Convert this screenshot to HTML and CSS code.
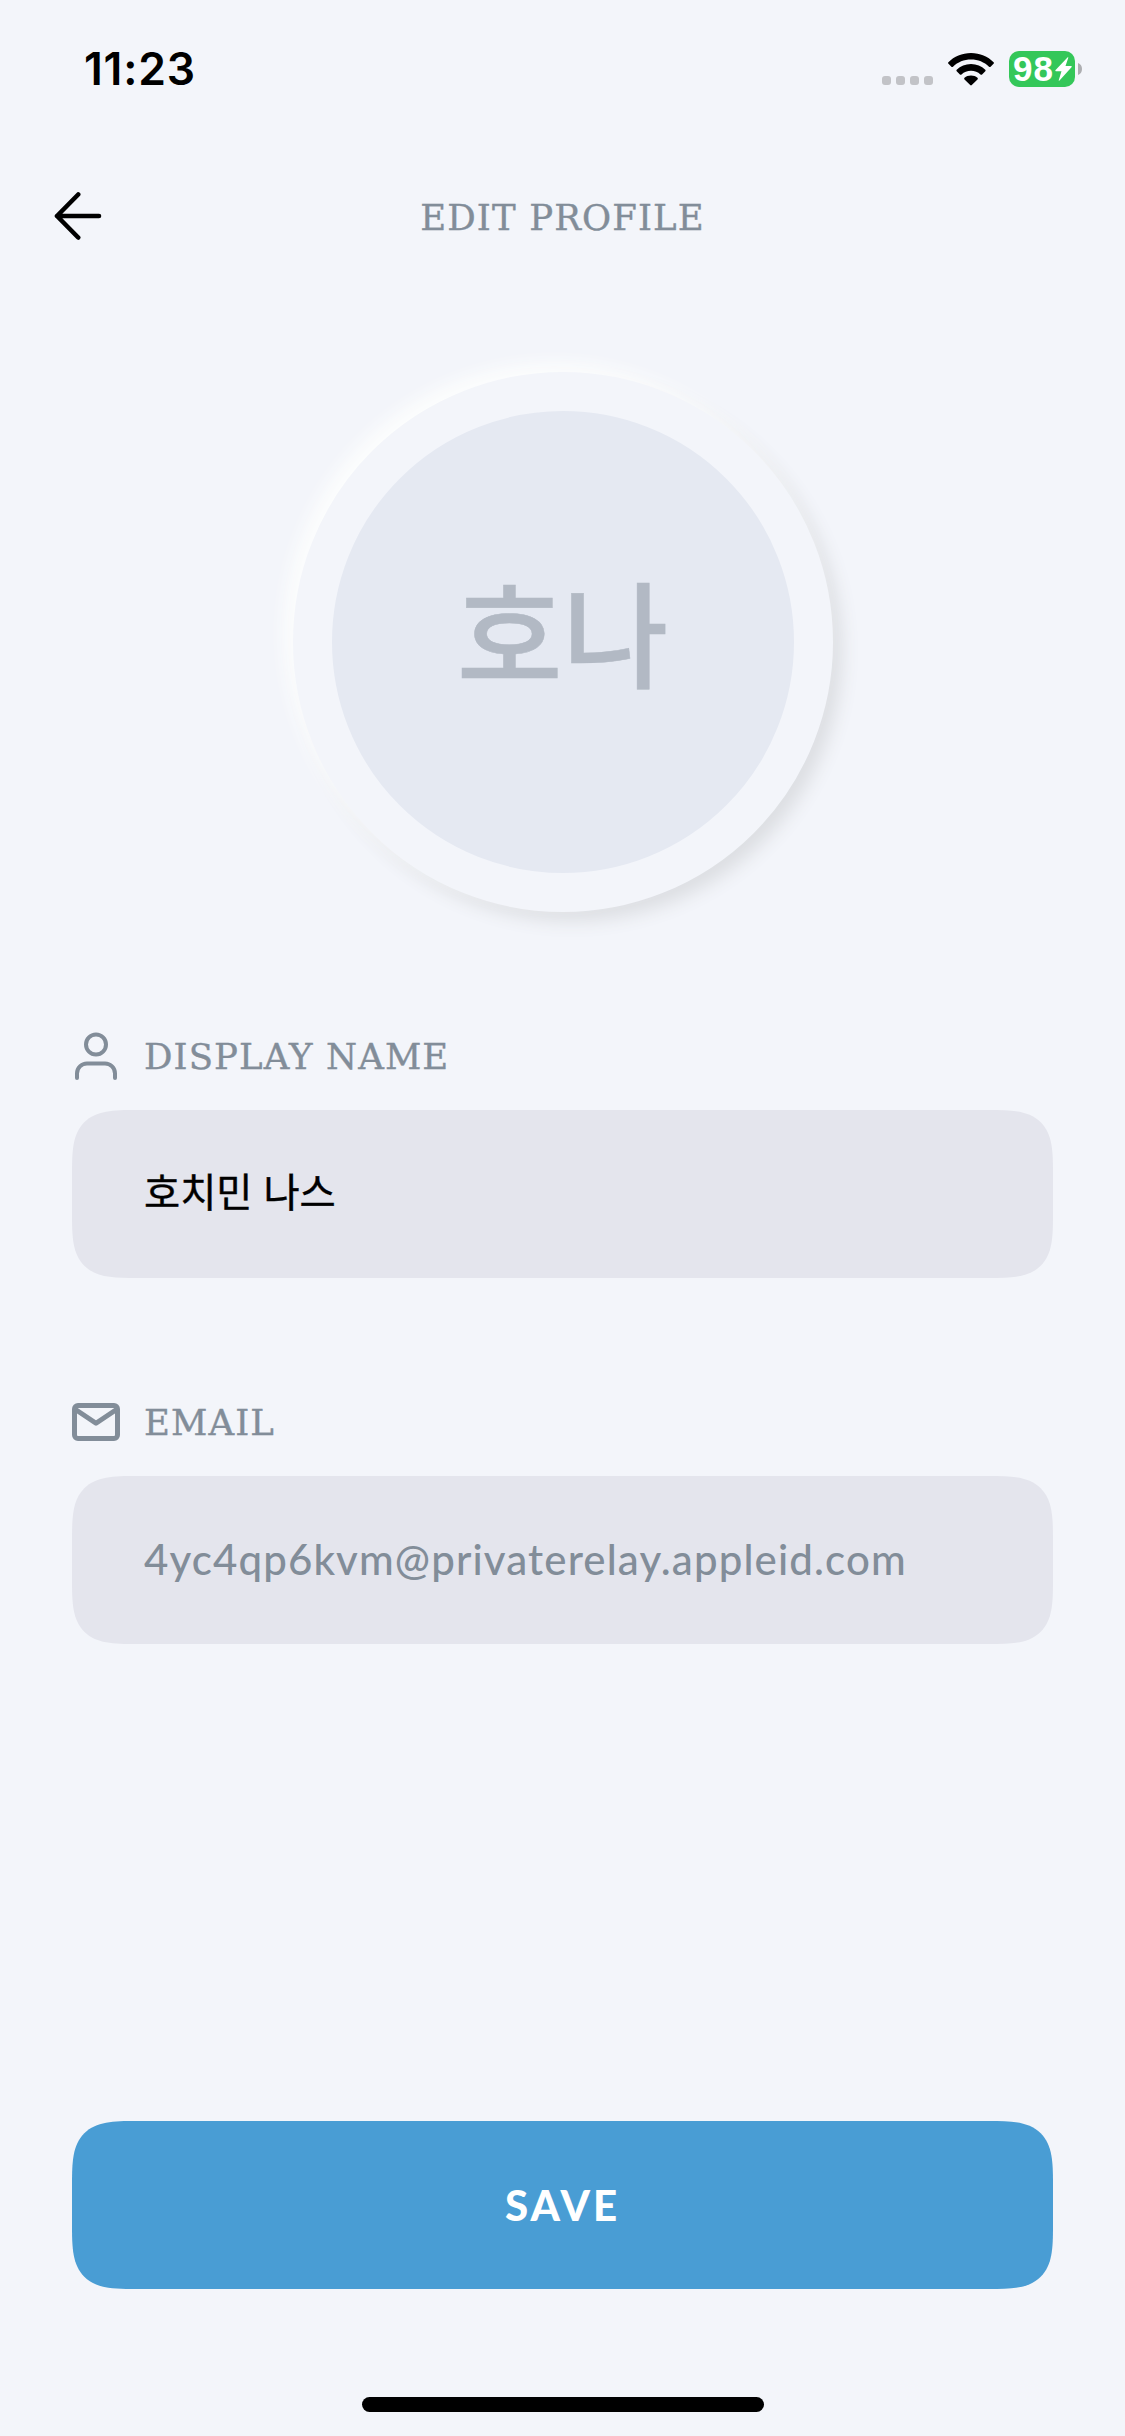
FILE: index.html
```html
<!DOCTYPE html>
<html lang="ko">
<head>
<meta charset="utf-8">
<title>Edit Profile</title>
<link rel="stylesheet" href="styles.css">
</head>
<body>
<div class="screen">
  <div class="status-bar">
    <span class="clock">11:23</span>
    <div class="indicators">
      <div class="signal"><i class="dot"></i><i class="dot"></i><i class="dot"></i><i class="dot"></i></div>
      <svg class="wifi" viewBox="0 0 46 33" width="46" height="33">
        <path d="M23 0C32 0 39.800 3.500 45.600 9.200Q46.300 10 45.500 10.800L42.600 13.700Q41.800 14.400 41 13.700C36.200 9.200 30 6.600 23 6.600S9.800 9.200 5 13.700Q4.200 14.400 3.400 13.700L.5 10.800Q-.3 10 .4 9.200C6.200 3.500 14 0 23 0Z"/>
        <path d="M23 11C28.600 11 33.500 13.100 37.300 16.700Q38 17.500 37.300 18.300L34.100 21.400Q33.300 22.100 32.500 21.400C29.900 19 26.700 17.700 23 17.700S16.100 19 13.500 21.400Q12.700 22.100 11.900 21.400L8.700 18.300Q8 17.500 8.700 16.700C12.500 13.100 17.400 11 23 11Z"/>
        <path d="M23 22.500C25.600 22.500 27.700 23.300 29.500 24.800Q30.300 25.600 29.500 26.400L23.800 32.100Q23 32.900 22.200 32.100L16.500 26.400Q15.700 25.600 16.500 24.800C18.300 23.300 20.400 22.500 23 22.500Z"/>
      </svg>
      <div class="battery">
        <div class="battery-body">
          <span class="battery-level">98</span>
          <svg viewBox="0 0 17 24" width="17" height="24"><path d="M12.700.3Q13.600-.2 13.200 1L10.500 9H16.200Q17.200 9.200 16.500 10.200L4.500 23.500Q3.500 24.300 3.800 23L6.500 14.300H.9Q-.2 14.100.6 13Z" fill="#fff"/></svg>
        </div>
        <svg class="battery-cap" viewBox="0 0 4 12" width="4" height="12"><path d="M0 0Q4 1.500 4 6T0 12Z"/></svg>
      </div>
    </div>
  </div>

  <header class="nav">
    <svg class="back" viewBox="0 0 48 48" width="48" height="48"><path d="M24.200 2.500 3 24 24.200 45.500M3 24H45"/></svg>
    <h1 class="title">EDIT PROFILE</h1>
  </header>

  <main class="content">
    <div class="avatar"><span class="initials">호나</span></div>

    <section class="field">
      <div class="field-head">
        <svg class="icon" viewBox="0 0 48 48" width="48" height="48"><circle cx="24" cy="12.500" r="10"/><path d="M5 46V41.500A10 10 0 0 1 15 31.500H33A10 10 0 0 1 43 41.500V46"/></svg>
        <span class="label">DISPLAY NAME</span>
      </div>
      <div class="input input-name"><span>호치민 나스</span></div>
    </section>

    <section class="field">
      <div class="field-head">
        <svg class="icon icon-mail" viewBox="0 0 48 48" width="48" height="48"><rect x="2.500" y="7.500" width="43" height="33" rx="3.500"/><path d="M3.500 11.500 24 25.300 44.500 11.500"/></svg>
        <span class="label">EMAIL</span>
      </div>
      <div class="input input-email"><span>4yc4qp6kvm@privaterelay.appleid.com</span></div>
    </section>
  </main>

  <footer class="footer">
    <button class="save"><span>SAVE</span></button>
    <div class="home-indicator"></div>
  </footer>
</div>
</body>
</html>
```
FILE: styles.css
```css
* { box-sizing: border-box; }

body { margin: 0; background: #f3f5fa; }

.screen {
  display: flex;
  flex-direction: column;
  width: 1125px;
  height: 2436px;
  background: #f3f5fa;
}

.status-bar {
  display: flex;
  justify-content: space-between;
  align-items: center;
  height: 138px;
  padding: 0 43px 0 84px;
}

.clock {
  font: 600 44.500px/1 Inter, sans-serif;
  letter-spacing: 0.8px;
}

.indicators { display: flex; align-items: center; }

.signal { display: flex; gap: 5px; margin: 23px 15px 0 0; }
.dot { width: 9px; height: 9px; border-radius: 3px; background: #c2c3c7; }

.wifi { margin-right: 15px; }

.battery { display: flex; align-items: center; gap: 3px; }
.battery-body {
  display: flex;
  align-items: center;
  gap: 1px;
  width: 66px;
  height: 36px;
  padding-left: 4px;
  border-radius: 10px;
  background: #34c759;
}
.battery-level { width: 41px; color: #fff; font: 700 35px/36px "Liberation Sans", sans-serif; letter-spacing: 1px; }
.battery-cap { fill: #adaeb1; }

.nav {
  display: grid;
  grid-template-columns: 48px 1fr 48px;
  align-items: center;
  height: 156px;
  padding: 0 54px;
}
.back { fill: none; stroke: #000; stroke-width: 4.6; stroke-linecap: round; stroke-linejoin: round; }

.title, .label {
  margin: 0;
  color: #828d99;
  font: 400 35.500px/48px "DejaVu Serif", serif;
  letter-spacing: 1.100px;
  white-space: nowrap;
  -webkit-text-stroke: 0.4px #828d99;
}
.title { padding-top: 3px; text-align: center; }
.label { padding-top: 2px; }

.content { display: flex; flex-direction: column; align-items: center; padding: 78px 72px 0; }

.avatar {
  display: flex;
  justify-content: center;
  align-items: center;
  width: 540px;
  height: 540px;
  margin-bottom: 120px;
  padding-bottom: 25px;
  border: 39px solid #f3f5fa;
  border-radius: 50%;
  background: #e5e9f2;
  box-shadow: -9px -9px 16px #fcfdfd, 9px 9px 18px #dcdee2;
}
.initials { color: #b2b9c4; font: 500 115px/1 "Noto Sans CJK KR", sans-serif; -webkit-text-stroke: 0.5px #b2b9c4; }

.field { width: 100%; margin-bottom: 120px; }
.field-head { display: flex; align-items: center; gap: 24px; height: 48px; margin-bottom: 30px; }
.icon { fill: none; stroke: #828d99; stroke-width: 4; stroke-linecap: round; stroke-linejoin: round; }
.icon-mail { stroke-width: 5; }

.input, .save { width: 100%; height: 168px; border-radius: 45px; }
@supports (corner-shape: superellipse(1.7)) {
  .input, .save { border-radius: 64px; corner-shape: superellipse(1.7); }
}

.input { display: flex; align-items: center; padding-left: 72px; background: #e4e5ed; }
.input-name { padding-bottom: 9px; color: #000; font: 400 39.300px/1 "Noto Sans CJK KR", sans-serif; -webkit-text-stroke: 0.4px #000; }
.input-email { padding-bottom: 2px; color: #828d99; font: 500 42px/1 Lato, sans-serif; letter-spacing: 1.120px; }

.footer { display: flex; flex-direction: column; align-items: center; margin-top: auto; padding: 0 72px 24px; }
.save {
  margin-bottom: 108px;
  border: 0;
  padding: 0;
  color: #fff;
  background: #499dd4;
  font: 900 42px/1 Lato, sans-serif;
  letter-spacing: 3px;
}
.home-indicator { width: 402px; height: 15px; border-radius: 8px; background: #000; }
```
